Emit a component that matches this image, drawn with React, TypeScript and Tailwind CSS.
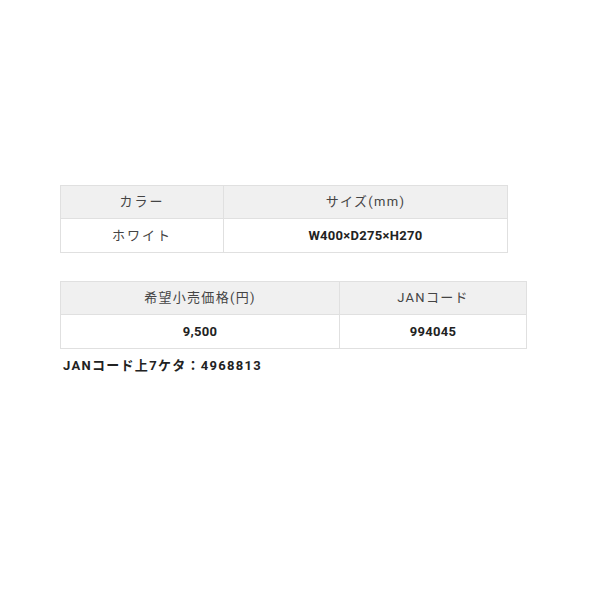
import React from 'react';

const font = { fontFamily: '"Roboto", "Noto Sans CJK JP", sans-serif' };

const App: React.FC = () => {
  return (
    <div className="w-[600px] h-[600px] bg-white pt-[185px] pl-[60px] text-[13px] text-[#222]" style={font}>
      <table className="w-[448px] border-collapse border border-[#e0e0e0] table-fixed">
        <colgroup>
          <col className="w-[163px]" />
          <col />
        </colgroup>
        <thead>
          <tr className="h-[33px] bg-[#f0f0f0] text-[#444]">
            <th className="border border-[#e0e0e0] font-normal tracking-[0.15em]">カラー</th>
            <th className="border border-[#e0e0e0] font-normal tracking-[0.1em]">サイズ(mm)</th>
          </tr>
        </thead>
        <tbody>
          <tr className="h-[34px]">
            <td className="border border-[#e0e0e0] text-center text-[#444] tracking-[0.15em]">ホワイト</td>
            <td className="border border-[#e0e0e0] text-center font-bold tracking-[0.3px]">W400×D275×H270</td>
          </tr>
        </tbody>
      </table>

      <table className="mt-[28px] w-[467px] border-collapse border border-[#e0e0e0] table-fixed">
        <colgroup>
          <col className="w-[279px]" />
          <col />
        </colgroup>
        <thead>
          <tr className="h-[33px] bg-[#f0f0f0] text-[#444]">
            <th className="border border-[#e0e0e0] font-normal tracking-[0.1em]">希望小売価格(円)</th>
            <th className="border border-[#e0e0e0] font-normal tracking-[0.1em]">JANコード</th>
          </tr>
        </thead>
        <tbody>
          <tr className="h-[34px]">
            <td className="border border-[#e0e0e0] text-center font-bold tracking-[0.3px]">9,500</td>
            <td className="border border-[#e0e0e0] text-center font-bold tracking-[0.3px]">994045</td>
          </tr>
        </tbody>
      </table>

      <p className="mt-[7px] pl-[3px] font-bold tracking-[0.1em]">JANコード上7ケタ：4968813</p>
    </div>
  );
};

export default App;
